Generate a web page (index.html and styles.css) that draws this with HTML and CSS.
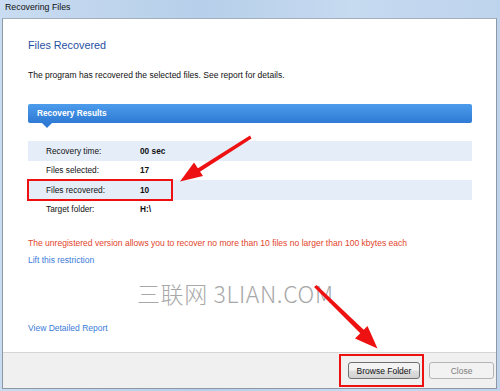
FILE: index.html
```html
<!DOCTYPE html>
<html lang="en">
<head>
    <meta charset="UTF-8">
    <title>Recovering Files</title>
    <link rel="stylesheet" href="styles.css">
</head>
<body>
    <div class="frame">
        <div class="titlebar">Recovering Files</div>
        <div class="client">
            <div class="content">
                <h1 class="heading">Files Recovered</h1>
                <p class="intro">The program has recovered the selected files. See report for details.</p>

                <div class="results-bar">Recovery Results</div>
                <div class="results">
                    <div class="row shaded"><span class="label">Recovery time:</span><span class="value">00 sec</span></div>
                    <div class="row"><span class="label">Files selected:</span><span class="value">17</span></div>
                    <div class="row shaded"><span class="label">Files recovered:</span><span class="value">10</span></div>
                    <div class="row"><span class="label">Target folder:</span><span class="value">H:\</span></div>
                </div>

                <p class="warning">The unregistered version allows you to recover no more than 10 files no larger than 100 kbytes each</p>
                <a class="link" href="#">Lift this restriction</a>
                <a class="link report" href="#">View Detailed Report</a>
            </div>
            <div class="footer">
                <button class="btn">Browse Folder</button>
                <button class="btn" disabled>Close</button>
            </div>
        </div>

        <!-- watermark + annotations drawn over the dialog -->
        <div class="watermark">三联网 3LIAN.COM</div>
        <div class="mark mark-row"></div>
        <div class="mark mark-button"></div>
        <svg class="arrows" width="500" height="391" viewBox="0 0 500 391">
            <polygon fill="#ee1111" points="250,135.5 251.5,138.5 198,173 196,169.5"/>
            <polygon fill="#ee1111" points="180,181.5 194,162.5 203,176"/>
            <polygon fill="#ee1111" points="314,287 316.5,285 364.5,330.5 361,334"/>
            <polygon fill="#ee1111" points="377.5,348.5 355,338.5 367.5,326"/>
        </svg>
    </div>
</body>
</html>
```

FILE: styles.css
```css
body, html {
    margin: 0;
    padding: 0;
    background: #bcd3ec;
}
.frame {
    position: relative;
    width: 500px;
    height: 391px;
    overflow: hidden;
    font-family: "Liberation Sans", Arial, sans-serif;
    background: linear-gradient(90deg, #c9dcf1, #b7cfea 40%, #c6daf0 70%, #bed4ed);
}
.titlebar {
    height: 18px;
    line-height: 15px;
    padding-left: 5px;
    font-size: 8.8px;
    color: #111;
}
.client {
    margin: 0 3px 0 2px;
    border: 1px solid #8c98a6;
    border-top-color: #a3adbb;
    background: #fff;
}
.content {
    height: 314px;
    padding: 19px 24px 0 25px;
}
.heading {
    margin: 0;
    font-size: 10.8px;
    line-height: 14px;
    font-weight: normal;
    color: #1f50a2;
}
.intro {
    margin: 17px 0 0;
    font-size: 8.5px;
    line-height: 12px;
    color: #111;
}
.results-bar {
    position: relative;
    margin-top: 23px;
    height: 19px;
    line-height: 19px;
    padding-left: 9px;
    border-radius: 2px;
    background: linear-gradient(#4c9cec, #2f7ad5);
    color: #fff;
    font-size: 8.3px;
    font-weight: bold;
}
.results-bar::after {
    content: "";
    position: absolute;
    left: 14px;
    top: 19px;
    border-left: 5px solid transparent;
    border-right: 5px solid transparent;
    border-top: 5px solid #2f7ad5;
}
.results {
    margin-top: 18px;
}
.row {
    display: flex;
    height: 19.5px;
    align-items: center;
    padding-left: 18px;
    font-size: 8.3px;
    color: #111;
}
.row.shaded {
    background: #e5edf8;
}
.label {
    width: 94px;
}
.value {
    font-weight: bold;
}
.warning {
    margin: 18px 0 0;
    font-size: 8.55px;
    line-height: 12px;
    color: #e2452c;
}
.link {
    display: block;
    margin-top: 5px;
    font-size: 8.5px;
    line-height: 12px;
    color: #3a7bd8;
    text-decoration: none;
}
.link.report {
    margin-top: 56px;
}
.footer {
    display: flex;
    justify-content: flex-end;
    gap: 9px;
    height: 26px;
    padding: 9px 2px 0 0;
    border-top: 1px solid #d6d6d6;
    background: #f0f0f0;
}
.btn {
    height: 17px;
    padding: 0;
    border: 1px solid #707070;
    border-radius: 3px;
    background: linear-gradient(#f3f3f3 45%, #dedede 55%, #d2d2d2);
    font-family: "Liberation Sans", Arial, sans-serif;
    font-size: 8.5px;
    color: #111;
}
.btn:first-child {
    width: 72px;
}
.btn:disabled {
    width: 65px;
    border-color: #b3b6b9;
    background: #f2f2f2;
    color: #7c7c7c;
}
.watermark {
    position: absolute;
    left: 137px;
    top: 276px;
    font-family: "Noto Sans CJK SC", sans-serif;
    font-size: 23px;
    font-weight: 300;
    letter-spacing: 0.6px;
    color: #a8a8a8;
    white-space: nowrap;
}
.mark {
    position: absolute;
    border: 2px solid #ee1111;
}
.mark-row {
    left: 27px;
    top: 179px;
    width: 142px;
    height: 18px;
}
.mark-button {
    left: 339px;
    top: 354px;
    width: 81px;
    height: 29px;
}
.arrows {
    position: absolute;
    left: 0;
    top: 0;
}
```
